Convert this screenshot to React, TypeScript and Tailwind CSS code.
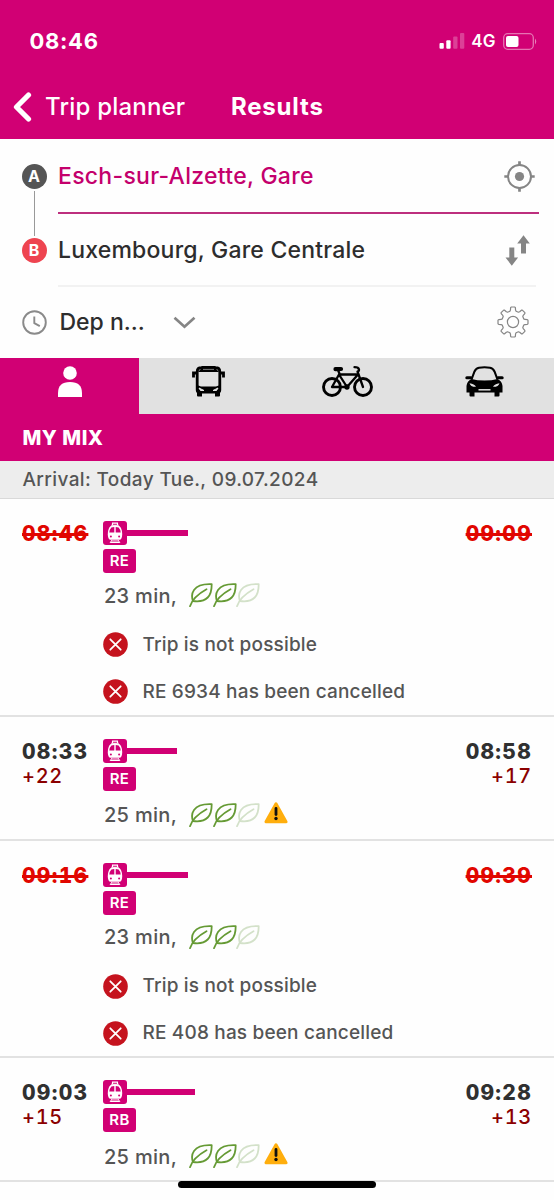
import type { ReactNode } from 'react';

type Trip = {
  departure: string;
  arrival: string;
  departureDelay?: string;
  arrivalDelay?: string;
  line: string;
  duration: string;
  bar: number; // length of the leg bar in px
  alerts?: string[];
};

const trips: Trip[] = [
  {
    departure: '08:46',
    arrival: '09:09',
    line: 'RE',
    duration: '23 min,',
    bar: 60.5,
    alerts: ['Trip is not possible', 'RE 6934 has been cancelled'],
  },
  {
    departure: '08:33',
    arrival: '08:58',
    departureDelay: '+22',
    arrivalDelay: '+17',
    line: 'RE',
    duration: '25 min,',
    bar: 50,
  },
  {
    departure: '09:16',
    arrival: '09:39',
    line: 'RE',
    duration: '23 min,',
    bar: 60.5,
    alerts: ['Trip is not possible', 'RE 408 has been cancelled'],
  },
  {
    departure: '09:03',
    arrival: '09:28',
    departureDelay: '+15',
    arrivalDelay: '+13',
    line: 'RB',
    duration: '25 min,',
    bar: 68,
  },
];

// outline of a cog with eight rounded teeth, centred on 0,0
const gearPath = () => {
  const profile: [number, number][] = [
    [-16, 11.2],
    [-12, 12.2],
    [-9.5, 14.5],
    [-7, 15.1],
    [7, 15.1],
    [9.5, 14.5],
    [12, 12.2],
    [16, 11.2],
  ];
  const points: string[] = [];
  for (let tooth = 0; tooth < 8; tooth++) {
    profile.forEach(([angle, radius]) => {
      const rad = ((tooth * 45 + angle) * Math.PI) / 180;
      points.push(
        `${(radius * Math.sin(rad)).toFixed(2)} ${(-radius * Math.cos(rad)).toFixed(2)}`
      );
    });
  }
  return `M${points.join('L')}Z`;
};

const TrainBadge = () => (
  <svg className="h-6 w-6 shrink-0" viewBox="0 0 24 24" fill="none">
    <rect width="24" height="24" rx="3" fill="#d10074" />
    <path d="M9.5 3.9V2.1h5v1.8M8.3 4.3h7.4" stroke="#fff" strokeWidth="1.1" />
    <path
      d="M8.2 4.8Q12 3.6 15.8 4.8C18 5.6 19.2 9.5 19.2 13.5C19.2 16.5 18.2 18.8 16.4 18.8H7.6C5.8 18.8 4.8 16.5 4.8 13.5C4.8 9.5 6 5.6 8.2 4.8Z"
      fill="#fff"
    />
    <path
      d="M8.4 6.5L11.3 5.9V11.4H6.3Q6.5 8.5 8.4 6.5ZM15.6 6.5L12.7 5.9V11.4H17.7Q17.5 8.5 15.6 6.5Z"
      fill="#d10074"
    />
    <circle cx="7.9" cy="15.4" r="1" fill="#d10074" />
    <circle cx="16.1" cy="15.4" r="1" fill="#d10074" />
    <path
      d="M8.8 19.2L7 22M15.2 19.2L17 22M8.3 20H15.7M7.6 21.5H16.4"
      stroke="#fff"
      strokeWidth="1"
    />
  </svg>
);

const Leaf = ({ faded = false }: { faded?: boolean }) => (
  <svg
    className="-mr-[0.3px] h-6 w-6 shrink-0"
    viewBox="0 0 24 24"
    fill="none"
    stroke={faded ? '#d3e1c9' : '#659a34'}
    strokeWidth="1.8"
    strokeLinecap="round"
    strokeLinejoin="round"
  >
    <path d="M22.7 1.2C15 .8 8.5 2.2 5 7C2.5 10.5 2.7 14.5 4 18C9 18.7 15 18.3 18.7 14.5C22.2 11 22.7 6.5 22.7 1.2Z" />
    <path d="M1 23.2C2.5 18.5 7 12 17.5 6.2" />
  </svg>
);

const Warning = () => (
  <svg className="mb-[4px] ml-[4px] h-6 w-6 shrink-0" viewBox="0 0 24 24">
    <path
      d="M12 2.8L22 20.8H2Z"
      fill="#ffae0d"
      stroke="#ffae0d"
      strokeWidth="3"
      strokeLinejoin="round"
    />
    <path d="M12 7.5V13.5" stroke="#111" strokeWidth="2.8" strokeLinecap="round" />
    <circle cx="12" cy="17.5" r="1.7" fill="#111" />
  </svg>
);

const Alert = ({ children }: { children: ReactNode }) => (
  <div className="flex h-[47px] items-center">
    <svg className="-ml-[0.5px] h-[25px] w-[25px] shrink-0" viewBox="0 0 25 25">
      <circle cx="12.5" cy="12.5" r="12.3" fill="#c5131e" />
      <path
        d="M7.3 7.3L17.7 17.7M17.7 7.3L7.3 17.7"
        stroke="#fff"
        strokeWidth="1.8"
        strokeLinecap="round"
      />
    </svg>
    <span className="mt-px ml-[15px] text-[19px] font-medium tracking-[0.17px] text-[#555]">
      {children}
    </span>
  </div>
);

const TripCard = ({ trip }: { trip: Trip }) => {
  const cancelled = !!trip.alerts;
  const timeClass = cancelled
    ? 'font-extrabold tracking-[1.3px] text-[#e10600] line-through decoration-[2.5px]'
    : 'font-extrabold tracking-[1.3px] text-[#303030]';

  return (
    <article
      className={`flex border-b-2 border-[#e2e2e2] px-[22px] pt-[22px] ${
        cancelled ? 'h-[217.5px]' : 'h-[124.2px]'
      }`}
    >
      <div className="w-[81px] text-xl leading-[25px] tabular-nums">
        <div className={`text-[21px] ${timeClass}`}>{trip.departure}</div>
        <div className="font-medium tracking-[0.7px] text-[#8b0000]">{trip.departureDelay}</div>
      </div>
      <div>
        <div className="flex items-center">
          <TrainBadge />
          <div className="h-[6px] bg-[#d10074]" style={{ width: trip.bar }} />
        </div>
        <div className="mt-1 flex h-6 w-[33px] items-center justify-center rounded-[3px] bg-[#d10074] pt-px text-[15px] font-semibold tracking-[0.4px] text-white">
          {trip.line}
        </div>
        <div
          className={`flex h-[28px] items-center text-xl font-medium text-[#555] ${
            cancelled ? 'mt-[8px]' : 'mt-[10px]'
          }`}
        >
          <span className="mt-px ml-[1px] w-[84.9px] tracking-[0.3px] whitespace-nowrap">
            {trip.duration}
          </span>
          <Leaf />
          <Leaf />
          <Leaf faded />
          {!cancelled && <Warning />}
        </div>
        {cancelled && (
          <div className="mt-[12px]">
            {trip.alerts?.map((alert) => (
              <Alert key={alert}>{alert}</Alert>
            ))}
          </div>
        )}
      </div>
      <div className="ml-auto text-right text-xl leading-[25px] tabular-nums">
        <div className={`text-[21px] ${timeClass}`}>{trip.arrival}</div>
        <div className="font-medium tracking-[0.7px] text-[#8b0000]">{trip.arrivalDelay}</div>
      </div>
    </article>
  );
};

const Header = () => (
  <header className="h-[139px] bg-[#d10074] text-white">
    <div className="flex h-[74px] items-center pt-[8px] pr-[16px] pl-[29.5px]">
      <span className="text-[22px] font-bold tracking-[0.7px]">08:46</span>
      <svg className="ml-auto h-4 w-[26px]" viewBox="0 0 26 16" fill="#fff">
        <rect x=".5" y="10" width="4.3" height="5.7" rx="1" />
        <rect x="7.3" y="7.3" width="4.3" height="8.4" rx="1" />
        <rect x="14.2" y="3.6" width="4.3" height="12.1" rx="1" opacity=".25" />
        <rect x="21" y="0" width="4.3" height="15.7" rx="1" opacity=".25" />
      </svg>
      <span className="mt-[2px] ml-[6.5px] text-[17px] font-semibold tracking-[0.4px]">4G</span>
      <svg className="ml-[7px] h-[17px] w-[35px]" viewBox="0 0 35 17" fill="none">
        <rect
          x=".7"
          y=".7"
          width="29.6"
          height="15.6"
          rx="4"
          stroke="#fff"
          strokeOpacity=".45"
          strokeWidth="1.3"
        />
        <rect x="3" y="3" width="12.5" height="11" rx="2" fill="#fff" />
        <path d="M32 5.5Q34.5 8.5 32 11.5Z" fill="#fff" fillOpacity=".5" />
      </svg>
    </div>
    <div className="flex h-[65px] items-center pl-[12px]">
      <svg className="h-[30px] w-5" viewBox="0 0 20 30" fill="none">
        <path
          d="M16.5 3L4.5 15L16.5 27"
          stroke="#fff"
          strokeWidth="5.2"
          strokeLinecap="round"
          strokeLinejoin="round"
        />
      </svg>
      <span className="ml-[13px] w-[186px] text-2xl font-medium tracking-[0.2px]">
        Trip planner
      </span>
      <h1 className="text-2xl font-bold tracking-[0.8px]">Results</h1>
    </div>
  </header>
);

const SearchForm = () => (
  <section className="h-[218.5px] text-[#2d2d2d]">
    <div className="flex">
      <div className="flex w-[58px] flex-col pt-[24.5px] pl-[21.5px] text-base font-bold text-white">
        <div className="flex h-[25px] w-[25px] items-center justify-center rounded-full bg-[#555]">
          A
        </div>
        <div className="my-[2px] ml-[12px] h-[45px] w-px bg-[#999]" />
        <div className="flex h-[25px] w-[25px] items-center justify-center rounded-full bg-[#ee4450]">
          B
        </div>
      </div>
      <div className="flex-1 text-[23px] font-medium">
        <div className="mr-[15px] flex h-[75px] items-center border-b-2 border-[#bd2f7e] pt-[2px]">
          <span className="tracking-[0.28px] text-[#c4006c]">Esch-sur-Alzette, Gare</span>
          <svg
            className="mr-[4px] ml-auto h-[31px] w-[31px]"
            viewBox="0 0 31 31"
            fill="none"
            stroke="#858585"
          >
            <circle cx="15.5" cy="15.5" r="11.5" strokeWidth="2" />
            <circle cx="15.5" cy="15.5" r="4.6" fill="#858585" stroke="none" />
            <path d="M15.5 .3V4M15.5 27V30.7M.3 15.5H4M27 15.5H30.7" strokeWidth="2.7" />
          </svg>
        </div>
        <div className="mr-[18px] flex h-[73px] items-center border-b-2 border-[#f2f2f2] pt-[2px]">
          <span className="tracking-[0.2px]">Luxembourg, Gare Centrale</span>
          <svg className="mr-[6.5px] ml-auto h-[31px] w-[25px]" viewBox="0 0 25 31" fill="#858585">
            <path d="M18.5 .3L24.8 8.5H21V18.5H16V8.5H12.2Z" />
            <path d="M6.8 30.7L13.1 22.5H9.3V12.5H4.3V22.5H.5Z" />
          </svg>
        </div>
      </div>
    </div>
    <div className="flex h-[70px] items-center pr-[25px] pl-[22px]">
      <svg
        className="h-[25px] w-[25px]"
        viewBox="0 0 25 25"
        fill="none"
        stroke="#8a8a8a"
        strokeWidth="1.9"
      >
        <circle cx="12.5" cy="12.5" r="11.3" />
        <path d="M12.3 6.5V13.2L17.8 16.2" strokeLinejoin="round" />
      </svg>
      <span className="mt-px ml-[12.5px] text-[23px] font-medium">Dep n...</span>
      <svg className="ml-[28.5px] h-[13px] w-[23px]" viewBox="0 0 23 13" fill="none">
        <path d="M1.5 1.8L11.5 10.7L21.5 1.8" stroke="#858585" strokeWidth="2.7" />
      </svg>
      <svg
        className="ml-auto h-8 w-8"
        viewBox="-16 -16 32 32"
        fill="none"
        stroke="#858585"
        strokeWidth="1.2"
        strokeLinejoin="round"
      >
        <path d={gearPath()} />
        <circle r="5.6" />
      </svg>
    </div>
  </section>
);

const ModeTabs = () => (
  <nav className="grid h-[56px] grid-cols-4 bg-[#e1e1e1]">
    <div className="flex justify-center bg-[#d10074] pt-[8px] pl-px">
      <svg className="h-[31px] w-6" viewBox="0 0 24 31" fill="#fff">
        <circle cx="12" cy="7" r="6.8" />
        <path d="M0 31V27Q0 16 12 16T24 27V31Z" />
      </svg>
    </div>
    <div className="flex justify-center pt-[8px] pl-px">
      <svg className="h-[31px] w-[33px]" viewBox="0 0 33 31" fill="none">
        <path
          d="M5.2 24V6Q5.2 1.6 9.5 1.5Q16.5 .9 23.5 1.5Q27.8 1.6 27.8 6V24Q27.8 26 25.5 26H7.5Q5.2 26 5.2 24Z"
          stroke="#000"
          strokeWidth="2.8"
        />
        <path d="M10 1.8H23L27 6H6Z" fill="#000" />
        <path d="M11 3.4H22" stroke="#999" strokeWidth=".8" />
        <path d="M5.5 7H1.5V11.5M27.5 7H31.5V11.5" stroke="#000" strokeWidth="2.8" />
        <path d="M4.8 19L9 20.5H24L28.2 19V26.8H4.8Z" fill="#000" />
        <path d="M7 22L12 24.5H8.5ZM26 22L21 24.5H24.5Z" fill="#e1e1e1" stroke="#e1e1e1" />
        <path
          d="M5 26H10V30.5H6Q5 30.5 5 29.5ZM23 26H28V29.5Q28 30.5 27 30.5H23Z"
          fill="#000"
        />
      </svg>
    </div>
    <div className="flex justify-center pt-[8px] pl-[2px]">
      <svg
        className="h-[31px] w-[51px]"
        viewBox="0 0 51 31"
        fill="none"
        stroke="#000"
        strokeWidth="2.3"
        strokeLinecap="round"
        strokeLinejoin="round"
      >
        <circle cx="10" cy="21" r="8.5" strokeWidth="2.9" />
        <circle cx="41" cy="21" r="8.5" strokeWidth="2.9" />
        <path d="M10 21L17 8.5H36L25 21H10M17 8.5L25 21M16 4L18 9" />
        <path d="M41 21L35.5 5.5Q37 5.5 37 3.5Q36.5 1.2 32.5 1.2" />
        <path d="M13.5 3.2L19 3" strokeWidth="4.2" />
        <circle cx="25" cy="21" r="1.5" fill="#000" />
      </svg>
    </div>
    <div className="flex justify-center pt-[8px]">
      <svg className="h-[31px] w-[39px]" viewBox="0 0 39 31" fill="none">
        <path
          d="M6.5 13.5L9.5 5.5Q10.8 2.5 14 1.8Q19.5 .7 25 1.8Q28.2 2.5 29.5 5.5L32.5 13.5"
          stroke="#000"
          strokeWidth="2.1"
        />
        <path
          d="M1.8 11.8H6M33 11.8H37.2"
          stroke="#000"
          strokeWidth="3"
          strokeLinecap="round"
        />
        <path
          d="M6.5 13Q12 14.5 19.5 14.5T32.5 13Q37 15 37.5 20V26.5H1.5V20Q2 15 6.5 13Z"
          fill="#000"
        />
        <path
          d="M4.5 17.2Q9.5 18 11 20.8Q5.5 21 4.5 17.2ZM34.5 17.2Q29.5 18 28 20.8Q33.5 21 34.5 17.2Z"
          fill="#e1e1e1"
        />
        <path d="M13.5 23.8H25.5" stroke="#e1e1e1" strokeWidth="1.5" />
        <path
          d="M4.5 26H9.5V30.5H5.5Q4.5 30.5 4.5 29.5ZM29.5 26H34.5V29.5Q34.5 30.5 33.5 30.5H29.5Z"
          fill="#000"
        />
      </svg>
    </div>
  </nav>
);

export default function App() {
  return (
    <div className="relative h-[1200px] w-[554px] overflow-hidden bg-[#fefefe] font-['Inter',sans-serif]">
      <Header />
      <SearchForm />
      <ModeTabs />
      <div className="flex h-[47.5px] items-center bg-[#d10074] pt-px pl-[22.5px] text-xl font-extrabold tracking-[0.5px] text-white">
        MY MIX
      </div>
      <div className="flex h-[38px] items-center border-b border-[#d9d9d9] bg-[#ededed] pt-[2px] pl-[22.5px] text-[19px] font-medium tracking-[0.38px] text-[#555]">
        Arrival: Today Tue., 09.07.2024
      </div>
      <main>
        {trips.map((trip) => (
          <TripCard key={trip.departure} trip={trip} />
        ))}
      </main>
      {/* home indicator */}
      <div className="absolute bottom-[12px] left-[178px] h-[7.5px] w-[198px] rounded-full bg-black" />
    </div>
  );
}
